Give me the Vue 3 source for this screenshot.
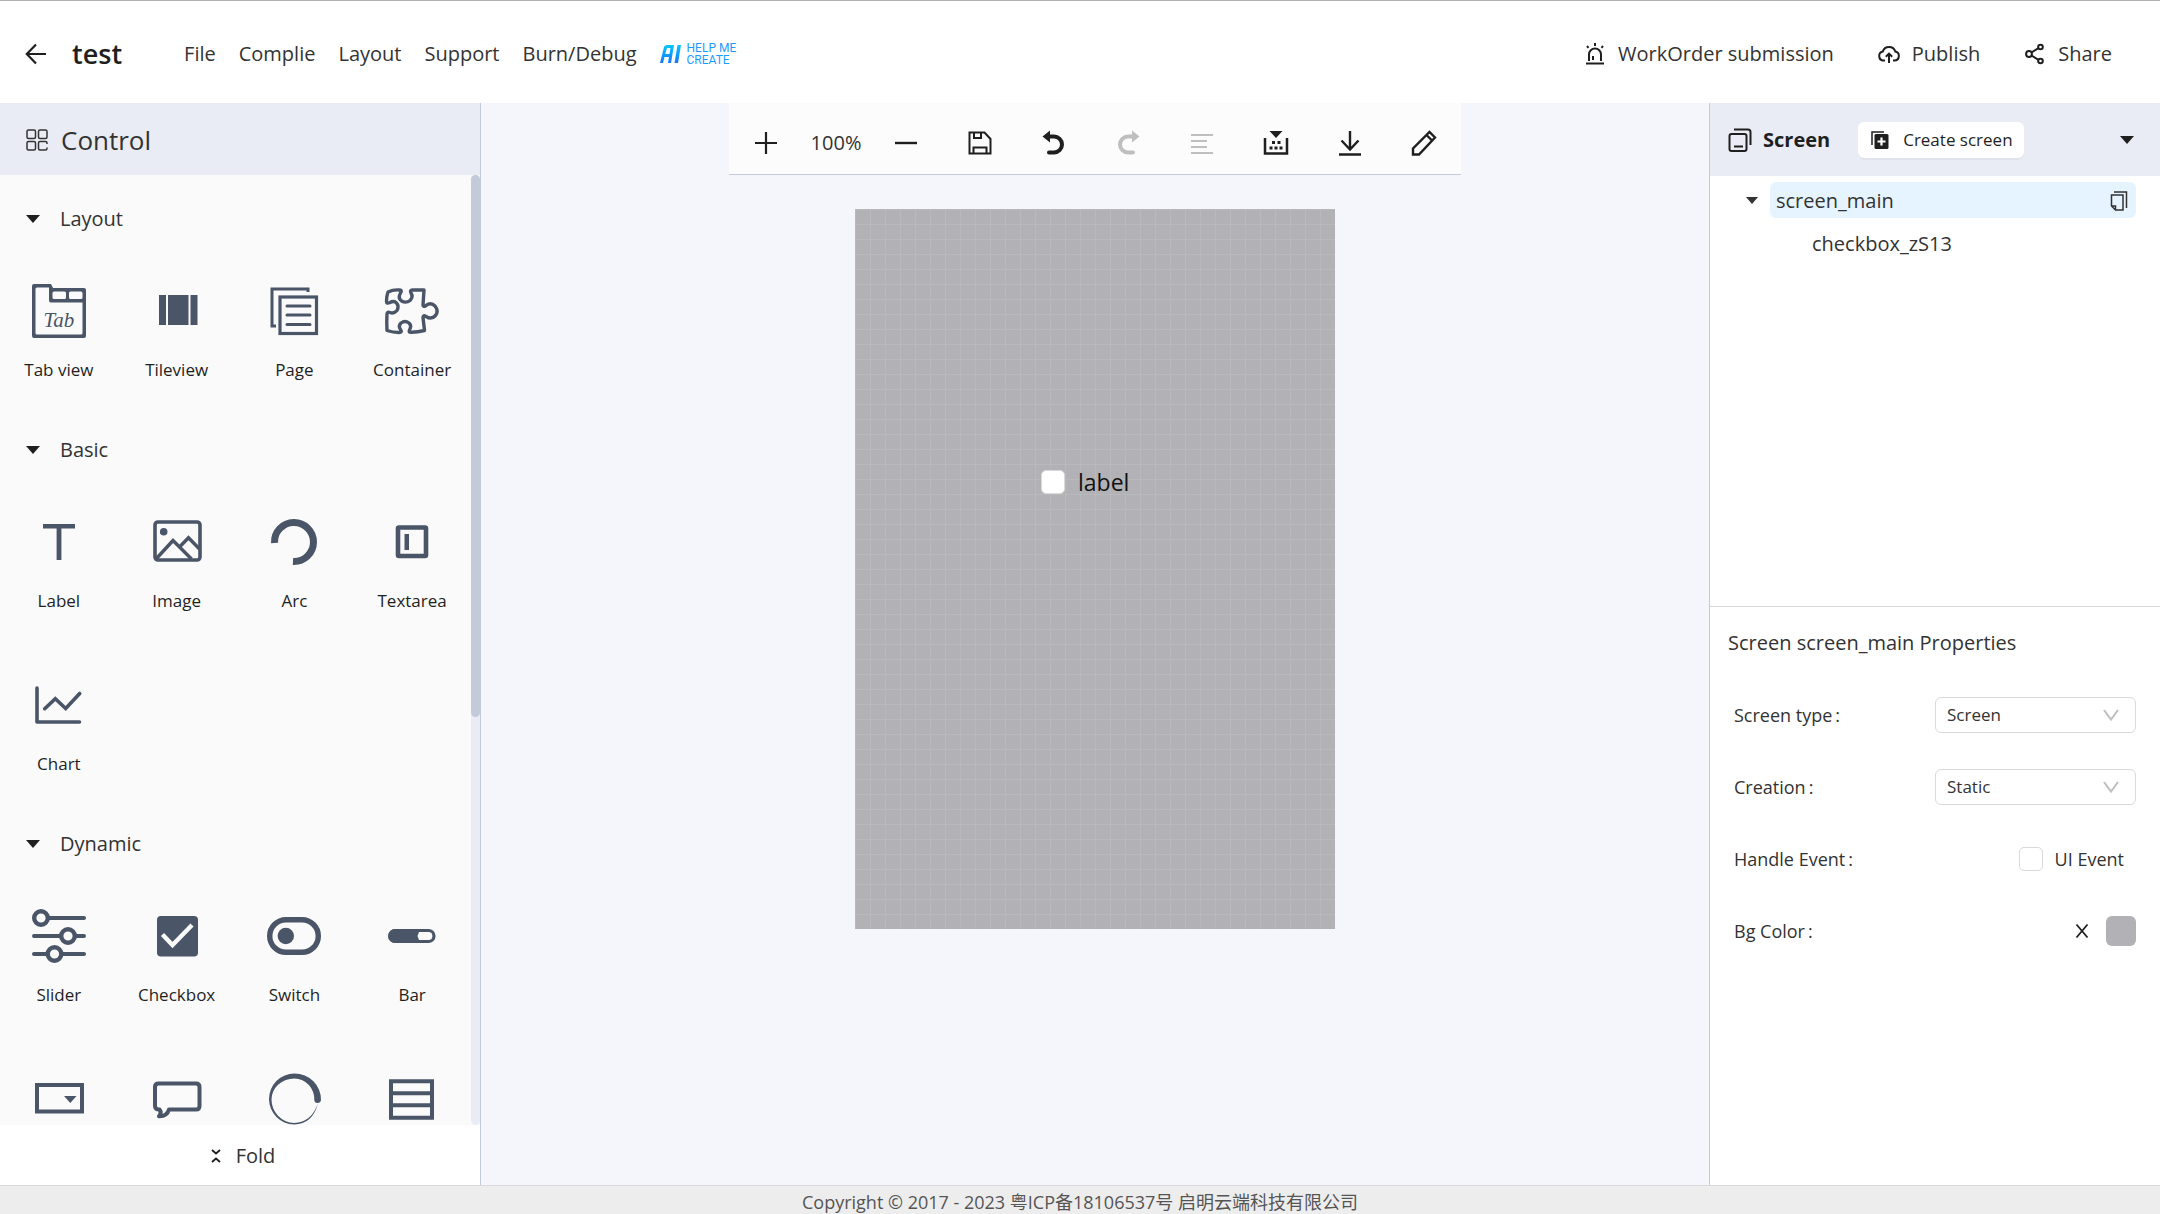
<script setup>
import { ref } from 'vue'

const screenType = ref('Screen')
const creation = ref('Static')
const uiEvent = ref(false)
const canvasChecked = ref(false)

const menus = ['File', 'Complie', 'Layout', 'Support', 'Burn/Debug']

const actions = [
  {
    name: 'WorkOrder submission',
    icon: '<path d="M5 18v-6.500a6 6 0 0 1 12 0V18M9 17v-4M2 20.500h18M11 0v3M3 3l1.500 1.800M19 3l-1.500 1.800"/>',
  },
  {
    name: 'Publish',
    icon: '<path d="M7 17.500H5.500a4.500 4.500 0 0 1-.7-8.900 6.500 6.500 0 0 1 12.500 0 4.500 4.500 0 0 1-.8 8.900H15M11 20v-9M7.800 13.800 11 10.600l3.200 3.200"/>',
  },
  {
    name: 'Share',
    icon: '<circle cx="5" cy="11" r="2.900"/><circle cx="16.500" cy="4" r="2.300"/><circle cx="16.500" cy="18" r="2.300"/><path d="M7.500 9.500l7-4.300M7.500 12.500l7 4.300"/>',
  },
]

const tools = [
  { name: 'Save', icon: '<path d="M2.500 2.500h15l6 6.500v14.500h-21zM7 2.500v5.500h7V2.500M6.500 23.500v-6h13v6"/>' },
  { name: 'Undo', icon: '<path d="M8 6.500h5a8 8 0 0 1 0 16H8" stroke-width="4" stroke-linecap="round"/><path d="M1.500 6.500 9 .5v12z" class="solid"/>' },
  { name: 'Redo', off: true, icon: '<path d="M18 6.500h-5a8 8 0 0 0 0 16h5" stroke-width="4" stroke-linecap="round"/><path d="M24.500 6.500 17 .5v12z" class="solid"/>' },
  { name: 'Align', off: true, icon: '<path d="M2 5h22M2 11h16M2 17h16M2 23h22"/>' },
  { name: 'Build', icon: '<path d="M2 8v15.500h22V8" stroke-width="2.500"/><path d="M6.500 1h13L13 8z" class="solid"/><path d="M9 12.500h3M14.500 12.500h3M6.500 18h3M11.500 18h3M16.500 18h3" stroke-width="3"/>' },
  { name: 'Download', icon: '<path d="M13 1v18M4.500 10.500 13 19.500l8.500-9M2 24.500h22" stroke-width="2.400"/>' },
  { name: 'Edit', icon: '<path d="M2 24.500v-6L18.500 2l5.500 5.500L8 24.500zM15.500 5l5.500 5.500" stroke-width="2.400"/>' },
]

const groups = [
  {
    title: 'Layout',
    items: [
      { name: 'Tab view', icon: '<path fill-rule="evenodd" class="solid" d="M2 0h17l2 4h31q2 0 2 2v46q0 2-2 2H2q-2 0-2-2V2q0-2 2-2zM5 3.500q-1.500 0-1.500 1.500v44q0 1.500 1.500 1.500h44q1.500 0 1.500-1.500V18.500H19q-2 0-2-2V3.500zM22 7.500q-1.500 0-1.500 1.500v4.500q0 1.500 1.500 1.500h10.500q1.500 0 1.500-1.500V9q0-1.500-1.500-1.500zM38.500 7.500q-1.500 0-1.500 1.500v4.500q0 1.500 1.500 1.500H49q1.500 0 1.500-1.500V9q0-1.500-1.500-1.500z"/><text x="27" y="43" text-anchor="middle" class="glyph">Tab</text>' },
      { name: 'Tileview', icon: '<path class="solid" d="M9 11h7v30H9zM18 11h20.500v30H18zM40.500 11h7v30h-7z"/>' },
      { name: 'Page', icon: '<path stroke-width="3" d="M41 8V5H5v37h4"/><rect x="13" y="13" width="36.500" height="36.500" stroke-width="3.200"/><path stroke-width="3" stroke-linecap="round" d="M20 22h23M20 31h23M20 40.500h23"/>' },
      { name: 'Container', icon: '<path stroke-width="3.400" stroke-linejoin="round" d="M3 8q5-2.500 11.500-2 3 .2 1 3-3 5 1 8 4.500 2.500 8.500-.5 3.500-3.500 1-7.500-1.500-3 1.500-3H39l-1 15q0 2.500 3 .5 5-3.500 9 .5 4 5 .5 9.500-4 4.500-9.500 1-3-2-3 1l1.500 13q-7 1.500-13 1.800-3.500.2-2-2.300 2.500-4-.5-7-4-3-8 0-3 3-.5 6.500 2 3-1.500 3Q8 48.500 2 46.500q-.5-8 0-16.500.2-2.500 3-1.500 4 1.500 7-2 2.500-4.500-1-8-2.500-2-6 0-3.500 1.500-3.500-1Q1.500 12 3 8z"/>' },
    ],
  },
  {
    title: 'Basic',
    items: [
      { name: 'Label', icon: '<path class="solid" d="M11 9h32v4.500H29.400V45h-4.800V13.500H11z"/>' },
      { name: 'Image', icon: '<rect x="5" y="7" width="45" height="38" rx="3" stroke-width="3.600"/><circle cx="13.700" cy="16.700" r="3.800" class="solid"/><path stroke-width="3.400" d="m6 44 17-18.500L41.500 44M30 31.500l8.500-8.800L49.500 34"/>' },
      { name: 'Arc', icon: '<path stroke-width="7" d="M7.500 28A19.500 19.500 0 1 1 26 46.500"/>' },
      { name: 'Textarea', icon: '<rect x="13" y="12.500" width="28" height="28.500" rx="1" stroke-width="4.600"/><path class="solid" d="M19.500 19h4.500v16h-4.500z"/>' },
      { name: 'Chart', icon: '<path stroke-width="3.600" stroke-linecap="round" stroke-linejoin="round" d="M5 10v34h42.500"/><path stroke-width="3.600" stroke-linecap="round" d="m12.700 30.700 10.600-10 10.400 9.800 14-15"/>' },
    ],
  },
  {
    title: 'Dynamic',
    items: [
      { name: 'Slider', icon: '<path stroke-width="4" stroke-linecap="round" d="M17 9h35M2 27h26M44 27h8M2 45h13M30 45h22"/><g stroke-width="4.400"><circle cx="9" cy="9" r="6.800"/><circle cx="36" cy="27" r="6.800"/><circle cx="22.500" cy="45" r="6.800"/></g>' },
      { name: 'Checkbox', icon: '<rect x="7" y="7" width="41" height="40.500" rx="4" class="solid"/><path d="m12.500 25.500 10 10.500L42 16" stroke="#fafafa" stroke-width="4.400"/>' },
      { name: 'Switch', icon: '<rect x="2.700" y="10.700" width="48.600" height="32.600" rx="16.300" stroke-width="5.400"/><circle cx="18.800" cy="27" r="8.200" class="solid"/>' },
      { name: 'Bar', icon: '<rect x="5" y="21.500" width="44" height="11" rx="5.500" stroke-width="3.200"/><path class="solid" d="M10 20h21q3 0 3 3l-1.500 4 1.500 4q0 3-3 3H10a7 7 0 0 1 0-14z"/>' },
      { name: 'Dropdown', iconOnly: true, icon: '<rect x="5" y="13" width="45" height="26.500" stroke-width="4"/><path class="solid" d="M32 24h12.500l-6.200 7z"/>' },
      { name: 'Message', iconOnly: true, icon: '<path stroke-width="4" stroke-linejoin="round" d="M8.500 11.500H46q3.500 0 3.500 3.500v19q0 3.500-3.500 3.500H19q-2 7-10 6.800 3-3.500.5-6.800-4.500 0-4.500-3.500V15q0-3.500 3.500-3.500z"/>' },
      { name: 'Spinner', iconOnly: true, icon: '<path class="solid" d="M54 28A26.500 26 0 0 0 27.500 1.500 25.500 25.500 0 0 0 2 27.300 25.500 25.500 0 0 0 27 52.500Q46 52 51 31 45 50 27 51 A23.500 23.700 0 0 1 4.500 27.300 22.800 21 0 0 1 27.500 6.500 20 20.500 0 0 1 47.300 28Q47.500 31 50.500 31T54 28z"/>' },
      { name: 'List', iconOnly: true, icon: '<path stroke-width="4" d="M6 9.300h41v36.400H6zM6 21.300h41M6 33.300h41"/>' },
    ],
  },
]
</script>

<template>
  <div class="app">
    <header class="topbar">
      <button class="icon-btn" aria-label="Back">
        <svg width="22" height="22" viewBox="0 0 22 22"><path d="M21 11H2M11 1.500 1.800 11l9.200 9.500" stroke-width="2.200" /></svg>
      </button>
      <h1>test</h1>
      <nav class="menus">
        <a v-for="m in menus" :key="m" href="#">{{ m }}</a>
        <a href="#" class="ai">
          <svg width="21" height="18" viewBox="0 0 21 18" aria-label="AI">
            <defs>
              <linearGradient id="ai-fill" x1="0" y1="0" x2="0" y2="1">
                <stop offset="0" stop-color="#00c8ff" />
                <stop offset="1" stop-color="#1677ff" />
              </linearGradient>
            </defs>
            <path fill="url(#ai-fill)" stroke="none" fill-rule="evenodd" d="M4 2q1-2 3-2h7l-3 18H8l1-6H4.500L3 18H0zM7 3 5.200 9H9.500l1-6zM17.500 0H21l-3 18h-3.500z" />
          </svg>
          <span>HELP ME<br />CREATE</span>
        </a>
      </nav>
      <div class="actions">
        <button v-for="a in actions" :key="a.name" class="action">
          <svg width="22" height="22" viewBox="0 0 22 22" v-html="a.icon" />
          {{ a.name }}
        </button>
      </div>
    </header>

    <main class="body">
      <aside class="left">
        <h2 class="panel-head control-head">
          <svg width="22" height="22" viewBox="0 0 22 22">
            <g stroke-width="1.500"><rect x="1" y="1" width="8.500" height="8.500" rx="1.500" /><rect x="12.500" y="1" width="8.500" height="8.500" rx="1.500" /><rect x="1" y="12.500" width="8.500" height="8.500" rx="1.500" /><path d="M21 15v-1q0-1.500-1.500-1.500H14q-1.500 0-1.500 1.500v5.500q0 1.500 1.500 1.500h5.500q1.500 0 1.500-1.500v-1" /></g>
          </svg>
          Control
        </h2>
        <div class="palette">
          <div class="palette-list">
            <section v-for="g in groups" :key="g.title">
              <button class="group-head">
                <svg width="14" height="8" viewBox="0 0 14 8"><path class="solid" d="M0 0h14L7 8z" /></svg>
                {{ g.title }}
              </button>
              <div class="grid">
                <button v-for="i in g.items" :key="i.name" class="widget" :aria-label="i.name">
                  <svg width="54" height="54" viewBox="0 0 54 54" v-html="i.icon" />
                  <span v-if="!i.iconOnly">{{ i.name }}</span>
                </button>
              </div>
            </section>
          </div>
          <div class="track"><div class="thumb" /></div>
        </div>
        <button class="fold">
          <svg width="10" height="14" viewBox="0 0 10 14"><path d="m1 1 4 3.500L9 1M1 13l4-3.500L9 13" stroke-width="1.800" /></svg>
          Fold
        </button>
      </aside>

      <section class="stage">
        <div class="toolbar">
          <div class="zoom">
            <button class="icon-btn" aria-label="Zoom in"><svg width="26" height="26" viewBox="0 0 26 26"><path d="M13 2v22M2 13h22" stroke-width="2.200" /></svg></button>
            <span>100%</span>
            <button class="icon-btn" aria-label="Zoom out"><svg width="26" height="26" viewBox="0 0 26 26"><path d="M2 13h22" stroke-width="2.400" /></svg></button>
          </div>
          <button v-for="t in tools" :key="t.name" class="icon-btn" :class="{ off: t.off }" :aria-label="t.name">
            <svg width="26" height="26" viewBox="0 0 26 26" v-html="t.icon" />
          </button>
        </div>
        <div class="canvas">
          <label class="node"><input v-model="canvasChecked" type="checkbox" />label</label>
        </div>
      </section>

      <aside class="right">
        <div class="panel-head screen-head">
          <svg width="24" height="24" viewBox="0 0 24 24"><g stroke-width="2"><rect x="1.500" y="6" width="17" height="17" rx="2" /><path d="M6 1.500h14q2.500 0 2.500 2.500v13M6 18.500h9" /></g></svg>
          <h2>Screen</h2>
          <button class="create">
            <svg width="18" height="18" viewBox="0 0 18 18"><path d="M1 14V1h12" stroke-width="1.500" /><rect x="3.500" y="3" width="14" height="15" rx="1.500" class="solid" /><path d="M10.500 6.500v8M6.500 10.500h8" stroke="#fff" stroke-width="2.200" /></svg>
            Create screen
          </button>
          <button class="icon-btn collapse" aria-label="Collapse"><svg width="14" height="8" viewBox="0 0 14 8"><path class="solid" d="M0 0h14L7 8z" /></svg></button>
        </div>
        <div class="tree">
          <div class="tree-row">
            <svg width="12" height="7" viewBox="0 0 12 7"><path class="solid" d="M0 0h12L6 7z" /></svg>
            <div class="tree-item">
              <span>screen_main</span>
              <svg width="18" height="20" viewBox="0 0 18 20"><path d="M4 1h12.500v16M1.500 4H13v15H5.500l-4-4zM1.500 15h4v4" stroke-width="1.500" /></svg>
            </div>
          </div>
          <div class="tree-child">checkbox_zS13</div>
        </div>
        <form class="props" @submit.prevent>
          <h3>Screen screen_main Properties</h3>
          <div class="field">
            <label for="screen-type">Screen type<i>:</i></label>
            <div class="select">
              <select id="screen-type" v-model="screenType"><option>Screen</option></select>
              <svg width="16" height="12" viewBox="0 0 16 12"><path d="m1 1 7 9.500L15 1" /></svg>
            </div>
          </div>
          <div class="field">
            <label for="creation">Creation<i>:</i></label>
            <div class="select">
              <select id="creation" v-model="creation"><option>Static</option></select>
              <svg width="16" height="12" viewBox="0 0 16 12"><path d="m1 1 7 9.500L15 1" /></svg>
            </div>
          </div>
          <div class="field">
            <span>Handle Event<i>:</i></span>
            <label class="check"><input v-model="uiEvent" type="checkbox" />UI Event</label>
          </div>
          <div class="field">
            <span>Bg Color<i>:</i></span>
            <div class="color">
              <button class="icon-btn" aria-label="Clear colour"><svg width="14" height="14" viewBox="0 0 14 14"><path d="m1.500.5 11 13M12.500.5l-11 13" stroke-width="1.800" /></svg></button>
              <button class="swatch" aria-label="Background colour" />
            </div>
          </div>
        </form>
      </aside>
    </main>

    <footer>Copyright © 2017 - 2023 粤ICP备18106537号 启明云端科技有限公司</footer>
  </div>
</template>

<style>
body {
  margin: 0;
}
</style>

<style scoped>
.app {
  display: flex;
  flex-direction: column;
  height: 100vh;
  box-sizing: border-box;
  border-top: 1px solid #b0b0b6;
  background: #fff;
  color: #333;
  font-family: "Open Sans", "Noto Sans CJK SC", sans-serif;
  font-size: 20px;
  line-height: 28px;
}
.app * {
  box-sizing: border-box;
}
h1,
h2,
h3 {
  margin: 0;
  font-weight: 400;
}
button {
  padding: 0;
  border: 0;
  background: none;
  color: inherit;
  font: inherit;
  cursor: pointer;
}
a {
  color: inherit;
  text-decoration: none;
}
i {
  margin-left: 3px;
  font-style: normal;
}
svg {
  flex: none;
  display: block;
  fill: none;
  stroke: currentColor;
  stroke-width: 2px;
  overflow: visible;
}
svg :deep(.solid),
.solid {
  fill: currentColor;
  stroke: none;
}
svg :deep(.glyph) {
  fill: currentColor;
  stroke: none;
  font: italic 400 21px "Liberation Serif", serif;
}

/* top bar */
.topbar {
  flex: none;
  display: flex;
  align-items: center;
  height: 102px;
  padding: 4px 48px 0 25px;
}
.topbar svg,
.group-head svg,
.icon-btn:not(.off),
.screen-head,
.fold svg {
  color: #1f1f1f;
}
h1 {
  margin-left: 25px;
  color: #1f1f1f;
  font-size: 27px;
  font-weight: 600;
}
.menus {
  display: flex;
  align-items: center;
  gap: 23px;
  margin-left: 62px;
}
.ai {
  display: flex;
  align-items: center;
  gap: 6px;
  color: #1f9bff;
  font-family: Roboto, sans-serif;
  font-size: 12px;
  line-height: 12px;
}
.actions {
  display: flex;
  gap: 44px;
  margin-left: auto;
}
.action {
  display: flex;
  align-items: center;
  gap: 12px;
}

.body {
  flex: 1;
  min-height: 0;
  display: flex;
}
.panel-head {
  flex: none;
  display: flex;
  align-items: center;
  height: 72px;
  background: #e9ecf5;
}

/* widget palette */
.left {
  flex: none;
  display: flex;
  flex-direction: column;
  width: 481px;
  border-right: 1px solid #c3cad9;
}
.control-head {
  gap: 13px;
  padding: 2px 26px 0;
  font-size: 26px;
}
.palette {
  flex: 1;
  min-height: 0;
  display: flex;
  background: #fafafa;
}
.palette-list {
  flex: 1;
  overflow: hidden;
  padding-top: 10px;
}
.group-head {
  display: flex;
  align-items: center;
  gap: 20px;
  width: 100%;
  height: 68px;
  padding-left: 26px;
}
.grid {
  display: grid;
  grid-template-columns: repeat(4, 1fr);
}
.widget {
  display: flex;
  flex-direction: column;
  align-items: center;
  gap: 20px;
  height: 163px;
  padding-top: 31px;
  color: #4a5568;
}
.widget span {
  color: #1f1f1f;
  font-size: 17px;
  line-height: 24px;
}
.track {
  width: 9px;
  border-radius: 5px;
  background: #e9ecf5;
}
.thumb {
  height: 57%;
  border-radius: 5px;
  background: #c3cad9;
}
.fold {
  flex: none;
  display: flex;
  align-items: center;
  justify-content: center;
  gap: 15px;
  height: 60px;
  padding: 2px 0 0 6px;
}

/* work area */
.stage {
  flex: 1;
  display: flex;
  flex-direction: column;
  align-items: center;
  background: #f4f6fb;
}
.toolbar {
  display: flex;
  align-items: center;
  gap: 48px;
  height: 72px;
  padding: 8px 24px 0;
  border-bottom: 1px solid #c3cad9;
  background: #fcfcfc;
}
.zoom {
  display: flex;
  align-items: center;
  gap: 30px;
}
.zoom span {
  width: 54px;
  text-align: center;
}
.off {
  color: #bfbfbf;
}
.canvas {
  position: relative;
  width: 480px;
  height: 720px;
  margin-top: 34px;
  background-color: #b1b1b6;
  background-image: linear-gradient(#b8b9bb 1px, transparent 1px), linear-gradient(90deg, #b8b9bb 1px, transparent 1px);
  background-size: 15px 15px;
}
.node {
  position: absolute;
  left: 186px;
  top: 259px;
  display: flex;
  align-items: center;
  gap: 13px;
  color: #111;
  font-size: 23px;
}
input[type="checkbox"] {
  appearance: none;
  width: 24px;
  height: 24px;
  margin: 0;
  border: 1px solid #d9d9d9;
  border-radius: 5px;
  background: #fff;
}

/* screen panel */
.right {
  flex: none;
  width: 451px;
  border-left: 1px solid #c3cad9;
}
.screen-head {
  height: 73px;
  padding: 0 26px 0 18px;
}
.screen-head h2 {
  margin-left: 11px;
  font-size: 20px;
  font-weight: 700;
}
.create {
  display: flex;
  align-items: center;
  gap: 14px;
  height: 36px;
  margin-left: 28px;
  padding: 0 11px 0 13px;
  border-radius: 6px;
  background: #fff;
  box-shadow: 0 2px 0 rgba(0, 0, 0, 0.03);
  font-size: 17px;
}
.collapse {
  margin-left: auto;
}
.tree {
  height: 431px;
  padding: 6px 24px 0 36px;
  border-bottom: 1px solid #d9d9d9;
}
.tree-row {
  display: flex;
  align-items: center;
  gap: 12px;
}
.tree-item {
  flex: 1;
  display: flex;
  align-items: center;
  justify-content: space-between;
  height: 36px;
  padding: 2px 8px 0 6px;
  border-radius: 6px;
  background: #e6f4ff;
}
.tree-child {
  margin-top: 12px;
  padding-left: 66px;
}
.props {
  padding: 22px 24px 0;
}
h3 {
  margin: 0 0 22px -6px;
  font-size: 20px;
}
.field {
  display: flex;
  align-items: center;
  justify-content: space-between;
  height: 72px;
  font-size: 18px;
}
.select {
  position: relative;
  width: 201px;
}
select {
  appearance: none;
  display: block;
  width: 100%;
  height: 36px;
  padding: 0 11px;
  border: 1px solid #d9d9d9;
  border-radius: 6px;
  background: #fff;
  color: inherit;
  font: inherit;
  font-size: 17px;
}
.select svg {
  position: absolute;
  right: 17px;
  top: 12px;
  color: #bfbfbf;
  pointer-events: none;
}
.check {
  display: flex;
  align-items: center;
  gap: 12px;
  padding-right: 12px;
}
.color {
  display: flex;
  align-items: center;
  gap: 17px;
}
.swatch {
  width: 30px;
  height: 30px;
  border-radius: 6px;
  background: #b1b1b6;
}

footer {
  flex: none;
  height: 29px;
  border-top: 1px solid #d9d9d9;
  background: #ededed;
  color: #555;
  font-size: 18px;
  line-height: 32px;
  text-align: center;
}
</style>
